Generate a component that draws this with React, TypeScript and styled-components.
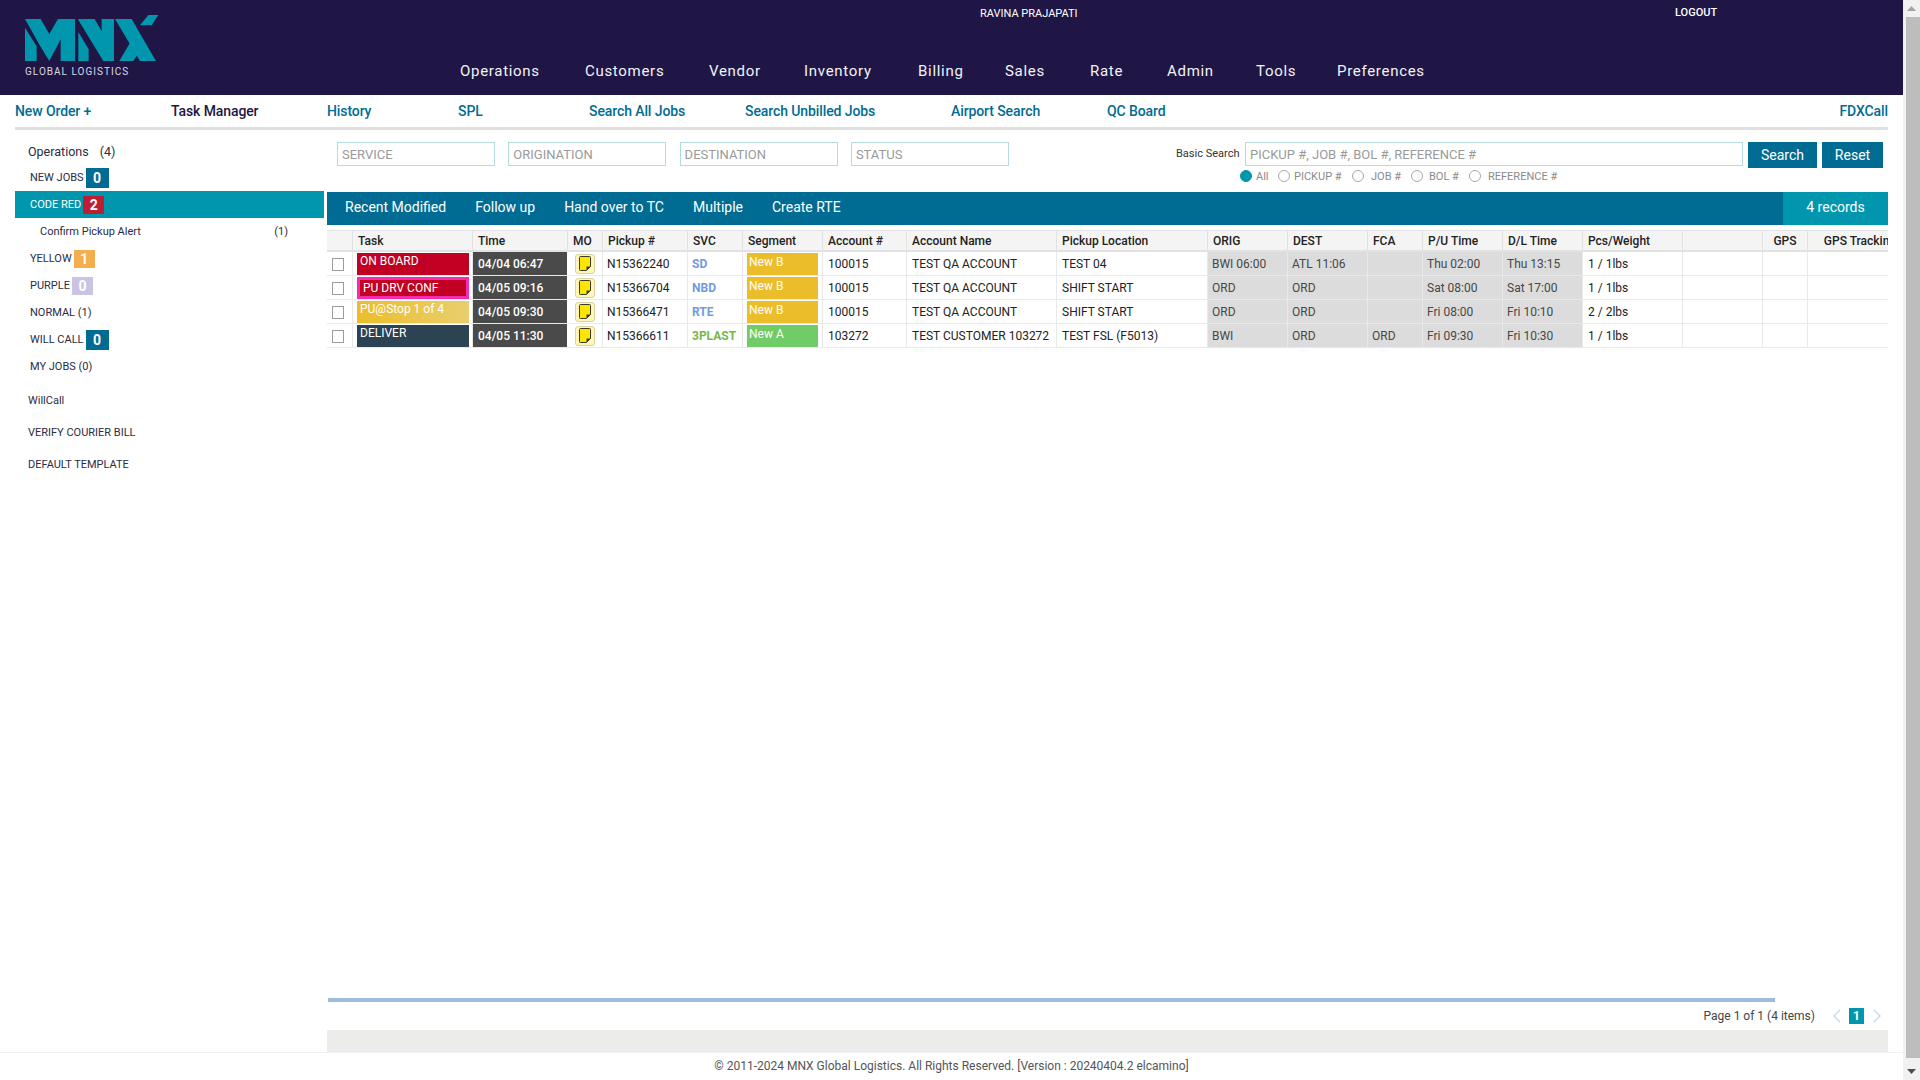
import React from 'react';
import styled, { createGlobalStyle } from 'styled-components';

const c = {
  navy: '#1f1646',
  blue: '#006c93',
  teal: '#0097ae',
  line: '#e9e9e9',
  text: '#222222',
};

const GlobalStyle = createGlobalStyle`
  html {
    overflow: hidden;
    height: 1080px;
  }
  body {
    margin: 0;
    background: #fff;
    font-family: Roboto, "Liberation Sans", sans-serif;
    font-size: 12px;
    color: ${c.text};
  }
  * {
    box-sizing: border-box;
  }
`;

const Page = styled.div`
  width: 1903px;
`;

const ScrollBar = styled.div`
  position: fixed;
  top: 0;
  right: 0;
  bottom: 0;
  width: 17px;
  background: #f1f1f1;
  display: flex;
  flex-direction: column;
  align-items: center;
`;

const ScrollArrow = styled.div`
  flex: none;
  height: 17px;
  display: flex;
  align-items: center;
  justify-content: center;
`;

const ScrollThumb = styled.div`
  flex: 1;
  width: 14px;
  margin-left: 2px;
  margin-bottom: 5px;
  background: #bdbdbd;
`;

const Header = styled.header`
  height: 95px;
  background: ${c.navy};
  display: grid;
  grid-template-columns: 460px 1fr;
  color: #fff;
`;

const Brand = styled.div`
  padding: 15px 0 0 25px;
`;

const LogoMark = styled.svg`
  display: block;
`;

const BrandName = styled.div`
  margin-top: 4px;
  font-size: 10px;
  line-height: 12px;
  letter-spacing: 1.02px;
  color: #d8d8e4;
`;

const HeaderRight = styled.div`
  display: flex;
  flex-direction: column;
`;

const UserRow = styled.div`
  height: 60px;
  padding-top: 7px;
  display: flex;
  font-size: 11px;
  line-height: 13px;
`;

const UserName = styled.span`
  margin-left: 520px;
  width: 695px;
`;

const Logout = styled.span`
  font-weight: 500;
  font-size: 11px;
  margin-top: -1px;
`;

const MainNav = styled.nav`
  display: flex;
  font-size: 15px;
  line-height: 22px;
  letter-spacing: 0.7px;
  color: #f2f2f6;
`;

const NavItem = styled.span<{ $w: number }>`
  width: ${(p) => p.$w}px;
`;

const SubNav = styled.nav`
  margin: 0 15px;
  height: 35px;
  border-bottom: 3px solid #e0e0e0;
  display: flex;
  align-items: center;
`;

const SubLink = styled.a<{ $w?: number; $dark?: boolean }>`
  width: ${(p) => (p.$w ? `${p.$w}px` : 'auto')};
  margin-left: ${(p) => (p.$w ? '0' : 'auto')};
  font-size: 14px;
  font-weight: 500;
  letter-spacing: -0.1px;
  color: ${(p) => (p.$dark ? c.navy : c.blue)};
`;

const Body = styled.div`
  display: flex;
  height: 923px;
  border-bottom: 1px solid #eef0f5;
`;

const Sidebar = styled.aside`
  width: 327px;
  flex: none;
  padding: 12px 3px 0 15px;
`;

const SideTitle = styled.div`
  height: 22px;
  padding-left: 13px;
  font-size: 12.5px;
  line-height: 20px;
  display: flex;
  gap: 11px;
  color: #2c2c44;
`;

const SideItem = styled.div<{ $active?: boolean }>`
  height: 27px;
  padding-left: 15px;
  display: flex;
  align-items: center;
  gap: 2px;
  font-size: 11px;
  background: ${(p) => (p.$active ? c.teal : 'transparent')};
  color: ${(p) => (p.$active ? '#fff' : '#2c2c44')};
`;

const SideChild = styled.div`
  height: 27px;
  padding: 0 36px 0 25px;
  display: flex;
  align-items: center;
  justify-content: space-between;
  font-size: 11px;
  color: #2c2c44;
`;

const SideLinks = styled.div`
  margin-top: 4px;
`;

const SideLink = styled.div`
  height: 32px;
  padding-left: 13px;
  display: flex;
  align-items: center;
  font-size: 11px;
  color: #2c2c44;
`;

const Badge = styled.span<{ $bg: string; $big?: boolean }>`
  display: inline-flex;
  align-items: center;
  justify-content: center;
  width: ${(p) => (p.$big ? '23px' : '21px')};
  height: ${(p) => (p.$big ? '20px' : '18px')};
  background: ${(p) => p.$bg};
  color: #fff;
  font-size: 14px;
  font-weight: 700;
`;

const Main = styled.main`
  flex: 1;
  min-width: 0;
  padding-right: 15px;
  display: flex;
  flex-direction: column;
`;

const FilterBar = styled.div`
  height: 62px;
  padding: 12px 5px 0 10px;
  display: flex;
  align-items: flex-start;
`;

const Filter = styled.input`
  width: 158px;
  height: 24px;
  margin-right: 13.3px;
  padding: 0 4px;
  border: 1px solid #b5dbe2;
  border-radius: 0;
  outline: none;
  font: 13px Roboto, sans-serif;
  color: #333;
  &::placeholder {
    color: #9a9a9a;
  }
`;

const SearchBlock = styled.div`
  margin-left: auto;
  display: flex;
  flex-direction: column;
`;

const SearchRow = styled.div`
  display: flex;
  align-items: flex-start;
`;

const SearchLabel = styled.label`
  width: 64px;
  font-size: 11px;
  line-height: 24px;
  margin-right: 5px;
  white-space: nowrap;
  color: #333;
`;

const BasicInput = styled(Filter)`
  width: 498px;
  margin-right: 5px;
`;

const ActionButton = styled.button<{ $w: number }>`
  width: ${(p) => p.$w}px;
  height: 26px;
  margin-right: 5px;
  border: 0;
  background: ${c.blue};
  color: #fff;
  font: 14px Roboto, sans-serif;
  padding: 0;
  &:last-child {
    margin-right: 0;
  }
`;

const RadioRow = styled.div`
  display: flex;
  align-items: center;
  height: 16px;
  margin-left: 64px;
  font-size: 11px;
  color: #8a8a8a;
`;

const Radio = styled.span<{ $on?: boolean; $gap: number }>`
  width: 12px;
  height: 12px;
  margin-right: ${(p) => p.$gap}px;
  border-radius: 50%;
  border: 1px solid ${(p) => (p.$on ? c.teal : '#a8a8a8')};
  background: ${(p) => (p.$on ? c.teal : '#fff')};
`;

const RadioLabel = styled.span<{ $w: number }>`
  width: ${(p) => p.$w}px;
  white-space: nowrap;
`;

const Toolbar = styled.div`
  height: 33px;
  background: ${c.blue};
  display: flex;
  align-items: center;
  padding-left: 18px;
  gap: 29px;
  color: #fff;
  font-size: 14px;
`;

const ToolItem = styled.span`
  margin-top: -3px;
`;

const Records = styled.div`
  margin-left: auto;
  width: 105px;
  height: 100%;
  padding-bottom: 3px;
  background: ${c.teal};
  display: flex;
  align-items: center;
  justify-content: center;
`;

const GridWrap = styled.div`
  flex: 1;
  margin-top: 5px;
  overflow: hidden;
`;

const Table = styled.table`
  table-layout: fixed;
  width: 1586px;
  border-collapse: separate;
  border-spacing: 0;
`;

const Col = styled.col<{ $w: number }>`
  width: ${(p) => p.$w}px;
`;

const Th = styled.th<{ $center?: boolean }>`
  height: 22px;
  padding: 1px 5px 0;
  background: #f4f4f4;
  border-top: 1px solid #e4e4e4;
  border-right: 1px solid #e2e2e2;
  border-bottom: 2px solid #e2e2e2;
  text-align: ${(p) => (p.$center ? 'center' : 'left')};
  font-size: 12px;
  font-weight: 500;
  color: #222;
  white-space: nowrap;
  overflow: hidden;
`;

const Td = styled.td<{ $shade?: boolean; $tight?: boolean }>`
  height: 24px;
  padding: 0 ${(p) => (p.$shade || p.$tight ? '4px' : '5px')};
  border-right: 1px solid ${c.line};
  border-bottom: 1px solid ${c.line};
  background: ${(p) => (p.$shade ? '#dcdcdc' : '#fff')};
  color: ${(p) => (p.$shade ? '#474747' : c.text)};
  font-size: 12px;
  white-space: nowrap;
  overflow: hidden;
`;

const BoxTd = styled(Td)`
  padding: 1px 0 0 5px;
`;

const Check = styled.input.attrs({ type: 'checkbox' })`
  appearance: none;
  display: block;
  width: 12px;
  height: 13px;
  margin: 0;
  border: 1px solid #9d9d9d;
  background: #fff;
`;

const FillTd = styled(Td)`
  padding: 1px 3px 0 4px;
`;

const TaskTag = styled.div<{ $bg: string; $ring?: boolean }>`
  height: 22px;
  padding-left: 3px;
  background: ${(p) => p.$bg};
  border: ${(p) => (p.$ring ? '3px solid #f52bb0' : '0')};
  color: #fff;
  font-size: 12px;
  line-height: 16px;
`;

const TimeTd = styled(Td)`
  padding: 0 0 0 5px;
  background: #4a4a4a;
  color: #fff;
  font-weight: 500;
  border-right-color: #fff;
`;

const MoTd = styled(Td)`
  padding: 0;
`;

const NoteButton = styled.span`
  display: flex;
  align-items: center;
  justify-content: center;
  width: 20px;
  height: 20px;
  margin: 0 auto;
  background: #fdf6b8;
  border: 1px solid #d9d3a0;
  border-radius: 3px;
`;

const Svc = styled.span<{ $color: string }>`
  color: ${(p) => p.$color};
  font-weight: 700;
`;

const SegmentTd = styled(Td)`
  padding: 1px 4px 0 4px;
`;

const SegmentTag = styled.div<{ $bg: string }>`
  height: 22px;
  padding-left: 2px;
  background: ${(p) => p.$bg};
  color: #fff;
  line-height: 18px;
`;

const HScroll = styled.div`
  height: 4px;
  width: 1447px;
  margin-left: 1px;
  background: #9cbcdb;
`;

const Pager = styled.div`
  height: 28px;
  padding-right: 6px;
  display: flex;
  align-items: center;
  justify-content: flex-end;
  font-size: 12px;
  color: #444;
`;

const PagerInfo = styled.span`
  margin-right: 17px;
`;

const PageNum = styled.span`
  width: 15px;
  height: 16px;
  margin: 0 9px 0 8px;
  background: ${c.teal};
  color: #fff;
  font-weight: 700;
  display: flex;
  align-items: center;
  justify-content: center;
`;

const Band = styled.div`
  height: 22px;
  background: #ecedeb;
`;

const Footer = styled.footer`
  height: 33px;
  padding-top: 6px;
  text-align: center;
  font-size: 12px;
  line-height: 14px;
  color: #555;
`;

const Logo = () => (
  <LogoMark width="133.3" height="46.7" viewBox="15 15 400 140">
    <g fill="#0097ae">
      <polygon points="15,53 50,109 50,153 15,153" />
      <polygon points="15,27 62,27 88,72 114,27 165,27 165,153 122,153 122,88 88,153 60,107" />
      <polygon points="175,27 224,27 245,64 245,27 282,27 282,153 250,153 175,30" />
      <polygon points="175,66 206,118 206,153 175,153" />
      <polygon points="285,27 335,27 408,153 360,153" />
      <polygon points="385,15 415,15 395,46 360,46" />
      <polygon points="298,153 331,97 353,133 340,153" />
    </g>
  </LogoMark>
);

const NoteIcon = () => (
  <svg width="12" height="15" viewBox="0 0 12 15">
    <path d="M1.5.5h9a1 1 0 0 1 1 1v9l-4 4h-6a1 1 0 0 1-1-1v-12a1 1 0 0 1 1-1z" fill="#ffe600" stroke="#3a3a20" />
    <path d="M7.5 14.5v-4h4z" fill="#3a3a20" />
  </svg>
);

const Chevron = ({ dir }: { dir: 'left' | 'right' }) => (
  <svg width="9" height="14" viewBox="0 0 9 14">
    <path d={dir === 'left' ? 'M8 1L2 7l6 6' : 'M1 1l6 6-6 6'} fill="none" stroke="#c6d9ec" strokeWidth="1.4" />
  </svg>
);

const Triangle = ({ up, color }: { up?: boolean; color: string }) => (
  <svg width="9" height="5" viewBox="0 0 9 5">
    <path d={up ? 'M0 5h9L4.5 0z' : 'M0 0h9L4.5 5z'} fill={color} />
  </svg>
);

const columns: [string, number, boolean?][] = [
  ['', 26], ['Task', 120], ['Time', 95], ['MO', 35], ['Pickup #', 85], ['SVC', 55], ['Segment', 80],
  ['Account #', 84], ['Account Name', 150], ['Pickup Location', 151], ['ORIG', 80], ['DEST', 80], ['FCA', 55],
  ['P/U Time', 80], ['D/L Time', 80], ['Pcs/Weight', 100], ['', 80], ['GPS', 45, true], ['GPS Tracking', 105, true],
];

const RED = '#c10024';
const rows = [
  { task: 'ON BOARD', bg: RED, time: '04/04 06:47', pickup: 'N15362240', svc: 'SD', svcColor: '#6f9be3', seg: 'New B', segBg: '#ecbd2a', acct: '100015', name: 'TEST QA ACCOUNT', loc: 'TEST 04', orig: 'BWI 06:00', dest: 'ATL 11:06', fca: '', pu: 'Thu 02:00', dl: 'Thu 13:15', pcs: '1 / 1lbs' },
  { task: 'PU DRV CONF', bg: RED, ring: true, time: '04/05 09:16', pickup: 'N15366704', svc: 'NBD', svcColor: '#6f9be3', seg: 'New B', segBg: '#ecbd2a', acct: '100015', name: 'TEST QA ACCOUNT', loc: 'SHIFT START', orig: 'ORD', dest: 'ORD', fca: '', pu: 'Sat 08:00', dl: 'Sat 17:00', pcs: '1 / 1lbs' },
  { task: 'PU@Stop 1 of 4', bg: 'linear-gradient(90deg, #ecbd2a, #e8cf6e)', time: '04/05 09:30', pickup: 'N15366471', svc: 'RTE', svcColor: '#6f9be3', seg: 'New B', segBg: '#ecbd2a', acct: '100015', name: 'TEST QA ACCOUNT', loc: 'SHIFT START', orig: 'ORD', dest: 'ORD', fca: '', pu: 'Fri 08:00', dl: 'Fri 10:10', pcs: '2 / 2lbs' },
  { task: 'DELIVER', bg: '#2b4353', time: '04/05 11:30', pickup: 'N15366611', svc: '3PLAST', svcColor: '#7ab648', seg: 'New A', segBg: '#71cb66', acct: '103272', name: 'TEST CUSTOMER 103272', loc: 'TEST FSL (F5013)', orig: 'BWI', dest: 'ORD', fca: 'ORD', pu: 'Fri 09:30', dl: 'Fri 10:30', pcs: '1 / 1lbs' },
];

const navItems: [string, number][] = [
  ['Operations', 125], ['Customers', 124], ['Vendor', 95], ['Inventory', 114], ['Billing', 87],
  ['Sales', 85], ['Rate', 77], ['Admin', 89], ['Tools', 81], ['Preferences', 100],
];
const toolItems = ['Recent Modified', 'Follow up', 'Hand over to TC', 'Multiple', 'Create RTE'];

export default function App() {
  return (
    <Page>
      <GlobalStyle />
      <Header>
        <Brand>
          <Logo />
          <BrandName>GLOBAL LOGISTICS</BrandName>
        </Brand>
        <HeaderRight>
          <UserRow>
            <UserName>RAVINA PRAJAPATI</UserName>
            <Logout>LOGOUT</Logout>
          </UserRow>
          <MainNav>
            {navItems.map(([n, w]) => <NavItem key={n} $w={w}>{n}</NavItem>)}
          </MainNav>
        </HeaderRight>
      </Header>

      <SubNav>
        <SubLink $w={156}>New Order +</SubLink>
        <SubLink $w={156} $dark>Task Manager</SubLink>
        <SubLink $w={131}>History</SubLink>
        <SubLink $w={131}>SPL</SubLink>
        <SubLink $w={156}>Search All Jobs</SubLink>
        <SubLink $w={206}>Search Unbilled Jobs</SubLink>
        <SubLink $w={156}>Airport Search</SubLink>
        <SubLink $w={100}>QC Board</SubLink>
        <SubLink>FDXCall</SubLink>
      </SubNav>

      <Body>
        <Sidebar>
          <SideTitle><span>Operations</span><span>(4)</span></SideTitle>
          <SideItem>NEW JOBS <Badge $bg={c.blue} $big>0</Badge></SideItem>
          <SideItem $active>CODE RED <Badge $bg="#bd1e32">2</Badge></SideItem>
          <SideChild><span>Confirm Pickup Alert</span><span>(1)</span></SideChild>
          <SideItem>YELLOW <Badge $bg="#f4ae4e">1</Badge></SideItem>
          <SideItem>PURPLE <Badge $bg="#cac3e4">0</Badge></SideItem>
          <SideItem>NORMAL (1)</SideItem>
          <SideItem>WILL CALL <Badge $bg={c.blue} $big>0</Badge></SideItem>
          <SideItem>MY JOBS (0)</SideItem>
          <SideLinks>
            <SideLink>WillCall</SideLink>
            <SideLink>VERIFY COURIER BILL</SideLink>
            <SideLink>DEFAULT TEMPLATE</SideLink>
          </SideLinks>
        </Sidebar>

        <Main>
          <FilterBar>
            <Filter placeholder="SERVICE" />
            <Filter placeholder="ORIGINATION" />
            <Filter placeholder="DESTINATION" />
            <Filter placeholder="STATUS" />
            <SearchBlock>
              <SearchRow>
                <SearchLabel>Basic Search</SearchLabel>
                <BasicInput placeholder="PICKUP #, JOB #, BOL #, REFERENCE #" />
                <ActionButton $w={69}>Search</ActionButton>
                <ActionButton $w={61}>Reset</ActionButton>
              </SearchRow>
              <RadioRow>
                <Radio $on $gap={4} /><RadioLabel $w={22}>All</RadioLabel>
                <Radio $gap={4} /><RadioLabel $w={58}>PICKUP #</RadioLabel>
                <Radio $gap={7} /><RadioLabel $w={40}>JOB #</RadioLabel>
                <Radio $gap={6} /><RadioLabel $w={40}>BOL #</RadioLabel>
                <Radio $gap={7} /><RadioLabel $w={80}>REFERENCE #</RadioLabel>
              </RadioRow>
            </SearchBlock>
          </FilterBar>

          <Toolbar>
            {toolItems.map((t) => <ToolItem key={t}>{t}</ToolItem>)}
            <Records>4 records</Records>
          </Toolbar>

          <GridWrap>
            <Table>
              <colgroup>
                {columns.map(([, w], i) => <Col key={i} $w={w} />)}
              </colgroup>
              <thead>
                <tr>
                  {columns.map(([name, , center], i) => <Th key={i} $center={center}>{name}</Th>)}
                </tr>
              </thead>
              <tbody>
                {rows.map((r) => (
                  <tr key={r.pickup}>
                    <BoxTd><Check /></BoxTd>
                    <FillTd><TaskTag $bg={r.bg} $ring={r.ring}>{r.task}</TaskTag></FillTd>
                    <TimeTd>{r.time}</TimeTd>
                    <MoTd><NoteButton><NoteIcon /></NoteButton></MoTd>
                    <Td $tight>{r.pickup}</Td>
                    <Td $tight><Svc $color={r.svcColor}>{r.svc}</Svc></Td>
                    <SegmentTd><SegmentTag $bg={r.segBg}>{r.seg}</SegmentTag></SegmentTd>
                    <Td>{r.acct}</Td>
                    <Td>{r.name}</Td>
                    <Td>{r.loc}</Td>
                    <Td $shade>{r.orig}</Td>
                    <Td $shade>{r.dest}</Td>
                    <Td $shade>{r.fca}</Td>
                    <Td $shade>{r.pu}</Td>
                    <Td $shade>{r.dl}</Td>
                    <Td>{r.pcs}</Td>
                    <Td />
                    <Td />
                    <Td />
                  </tr>
                ))}
              </tbody>
            </Table>
          </GridWrap>

          <HScroll />
          <Pager>
            <PagerInfo>Page 1 of 1 (4 items)</PagerInfo>
            <Chevron dir="left" />
            <PageNum>1</PageNum>
            <Chevron dir="right" />
          </Pager>
          <Band />
        </Main>
      </Body>

      <Footer>© 2011-2024 MNX Global Logistics. All Rights Reserved. [Version : 20240404.2 elcamino]</Footer>

      <ScrollBar>
        <ScrollArrow><Triangle up color="#a3a3a3" /></ScrollArrow>
        <ScrollThumb />
        <ScrollArrow><Triangle color="#505050" /></ScrollArrow>
      </ScrollBar>
    </Page>
  );
}
